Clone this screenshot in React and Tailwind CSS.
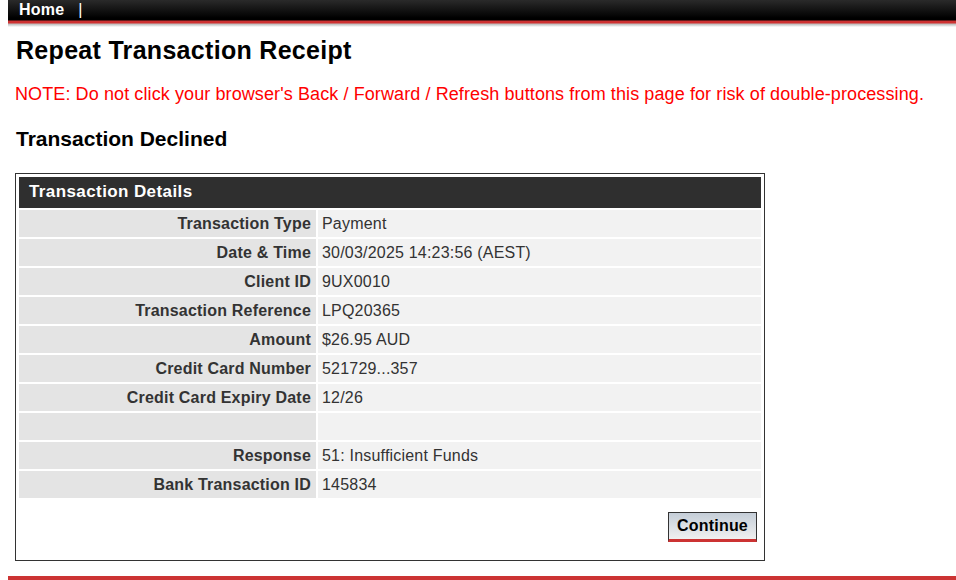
import React from 'react';

const rows = [
  ['Transaction Type', 'Payment'],
  ['Date & Time', '30/03/2025 14:23:56 (AEST)'],
  ['Client ID', '9UX0010'],
  ['Transaction Reference', 'LPQ20365'],
  ['Amount', '$26.95 AUD'],
  ['Credit Card Number', '521729...357'],
  ['Credit Card Expiry Date', '12/26'],
  ['', ''],
  ['Response', '51: Insufficient Funds'],
  ['Bank Transaction ID', '145834'],
];

const App = () => {
  return (
    <div className="min-h-[580px] bg-white pl-2 font-['Liberation_Sans',Arial,sans-serif] text-[#333]">
      {/* top nav */}
      <div className="h-[27px] bg-[linear-gradient(#2a2a2a_0px,#000_18px,#000_20px,#c33_21px,#d03030_23px,#bbb_24px,#e6e6e6_26px,#fff_27px)]">
        <div className="flex h-[20px] items-center pl-[11px] text-[16px] font-bold leading-none tracking-[0.2px] text-white">
          <span>Home</span>
          <span className="ml-[14px] font-normal">|</span>
        </div>
      </div>

      <div className="pl-[8px]">
        <h1 className="mt-[8px] text-[25px] font-bold leading-[30px] tracking-[0.3px] text-black">Repeat Transaction Receipt</h1>
        <p className="-ml-[1px] mt-[18px] text-[18px] leading-[22px] tracking-[0.1px] text-[#f00]">
          NOTE: Do not click your browser's Back / Forward / Refresh buttons from this page for risk of double-processing.
        </p>
        <h2 className="mt-[22px] text-[21px] font-bold leading-[24px] text-black">Transaction Declined</h2>

        <div className="-ml-[1px] mt-[22px] w-[750px] border border-[#333] p-[1px]">
          <table className="w-full border-separate border-spacing-[2px] text-[16px]">
            <thead>
              <tr>
                <th colSpan={2} className="h-[31px] bg-[#2f2f2f] pl-[10px] pb-[1px] text-left text-[17px] font-bold tracking-[0.4px] text-white">
                  Transaction Details
                </th>
              </tr>
            </thead>
            <tbody>
              {rows.map(([label, value], i) => (
                <tr key={i} className="h-[27px]">
                  <td className="w-[297px] bg-[#e4e4e4] pr-[5px] text-right font-bold tracking-[0.2px]">{label}</td>
                  <td className="bg-[#f2f2f2] pl-[4px] tracking-[0.2px]">{value}</td>
                </tr>
              ))}
              <tr>
                <td colSpan={2} className="pt-[12px] pb-[15px] pr-[4px] text-right">
                  <button className="h-[30px] w-[89px] border border-b-[3px] border-[#333] border-b-[#cc3333] bg-[linear-gradient(#c5ced8,#f0f0f0)] text-[16px] font-bold tracking-[0.2px] text-black">
                    Continue
                  </button>
                </td>
              </tr>
            </tbody>
          </table>
        </div>
      </div>

      <div className="mt-[15px] h-[6px] bg-[#cc3333]" />
    </div>
  );
};

export default App;
